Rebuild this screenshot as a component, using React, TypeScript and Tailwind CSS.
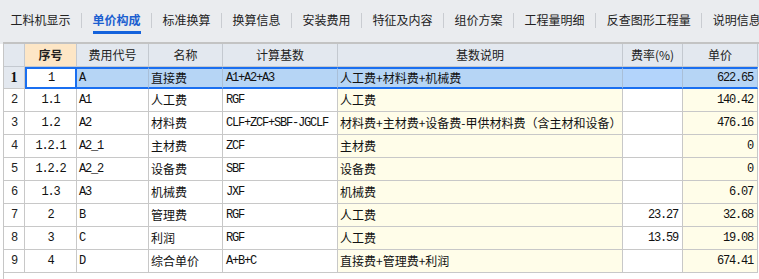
import React from 'react'

const tabs = ['工料机显示', '单价构成', '标准换算', '换算信息', '安装费用', '特征及内容', '组价方案', '工程量明细', '反查图形工程量', '说明信息']

const rows = [
  ['1', 'A', '直接费', 'A1+A2+A3', '人工费+材料费+机械费', '', '622.65'],
  ['1.1', 'A1', '人工费', 'RGF', '人工费', '', '140.42'],
  ['1.2', 'A2', '材料费', 'CLF+ZCF+SBF-JGCLF', '材料费+主材费+设备费-甲供材料费（含主材和设备）', '', '476.16'],
  ['1.2.1', 'A2_1', '主材费', 'ZCF', '主材费', '', '0'],
  ['1.2.2', 'A2_2', '设备费', 'SBF', '设备费', '', '0'],
  ['1.3', 'A3', '机械费', 'JXF', '机械费', '', '6.07'],
  ['2', 'B', '管理费', 'RGF', '人工费', '23.27', '32.68'],
  ['3', 'C', '利润', 'RGF', '人工费', '13.59', '19.08'],
  ['4', 'D', '综合单价', 'A+B+C', '直接费+管理费+利润', '', '674.41'],
]

const mono = "font-['Liberation_Mono','Noto_Sans_CJK_SC',monospace] text-[12px] tracking-[-1.2px]"
const cjk = "font-['Noto_Sans_CJK_SC',sans-serif] text-[12px]"

function TabBar() {
  return (
    <div className="h-[42px] bg-[#eaecef] flex items-start">
      {tabs.map((t, i) => (
        <React.Fragment key={t}>
          {i > 0 && <div className="w-px h-[15px] mt-[13px] bg-[#c9ccd1] shrink-0" />}
          <div className="px-[10.5px] pt-[12px] flex flex-col items-stretch shrink-0">
            <span
              className={`font-['Noto_Sans_CJK_SC',sans-serif] text-[12px] leading-[16px] whitespace-nowrap ${
                i === 1 ? 'text-[#1b5fd0] font-bold' : 'text-[#222]'
              }`}
            >
              {t}
            </span>
            {i === 1 && <div className="h-[3px] mt-[3px] bg-[#1462dc]" />}
          </div>
        </React.Fragment>
      ))}
    </div>
  )
}

function Header() {
  const cell = 'h-[23px] border-r border-b border-[#c4c9d0] flex items-center justify-center text-[#222] ' + cjk
  return (
    <div className="flex bg-[#e3e8ef]">
      <div className={cell + ' w-[21px]'} />
      <div className={cell + ' w-[52px] bg-[#fde6c6] font-bold'}>序号</div>
      <div className={cell + ' w-[72px]'}>费用代号</div>
      <div className={cell + ' w-[74px]'}>名称</div>
      <div className={cell + ' w-[115px]'}>计算基数</div>
      <div className={cell + ' w-[285px]'}>基数说明</div>
      <div className={cell + ' w-[60px]'}>费率(%)</div>
      <div className={cell + ' w-[75px]'}>单价</div>
    </div>
  )
}

function Row({ r, idx }: { r: string[]; idx: number }) {
  const sel = idx === 0
  const base = sel
    ? 'h-[22px] border-t-2 border-b-2 border-t-[#1a6ff0] border-b-[#1a6ff0] border-r border-r-[#a9bfd8] flex items-center text-[#111]'
    : 'h-[23px] border-r border-b border-[#c8c8c8] flex items-center text-[#111]'
  const yellow = sel ? 'bg-[#b6d5f5]' : 'bg-[#fffde9]'
  const white = sel ? 'bg-[#b6d5f5]' : 'bg-white'
  return (
    <div className="flex">
      <div
        className={`w-[21px] border-r border-b border-[#c8c8c8] flex items-center justify-center ${
          sel
            ? "h-[22px] bg-[#e3e8ef] font-['Liberation_Serif',serif] font-bold text-[14px] text-[#111]"
            : 'h-[23px] bg-white text-[#222] ' + mono
        }`}
      >
        {idx + 1}
      </div>
      <div
        className={
          sel
            ? `w-[52px] h-[22px] border-2 border-[#1a6ff0] bg-white flex items-center justify-center text-[#111] ${mono}`
            : `${base} w-[52px] justify-center bg-white ${mono}`
        }
      >
        {r[0]}
      </div>
      <div className={`${base} w-[72px] pl-[2px] ${white} ${mono}`}>{r[1]}</div>
      <div className={`${base} w-[74px] pl-[2px] ${white} ${cjk}`}>{r[2]}</div>
      <div className={`${base} w-[115px] pl-[3px] ${white} ${mono}`}>{r[3]}</div>
      <div className={`${base} w-[285px] pl-[2px] whitespace-nowrap overflow-hidden ${yellow} ${cjk}`}>{r[4]}</div>
      <div className={`${base} w-[60px] justify-end pr-[4px] ${sel ? 'bg-[#b3d4fb]' : 'bg-white'} ${mono}`}>{r[5]}</div>
      <div className={`${base} w-[75px] justify-end pr-[4px] ${yellow} ${mono}`}>{r[6]}</div>
    </div>
  )
}

export default function App() {
  return (
    <div className="w-[759px] h-[279px] bg-white overflow-hidden">
      <TabBar />
      <div className="bg-[#eaecef] h-[2px]">
        <div className="ml-[3px] h-[2px] bg-[#c3c3c3]" />
      </div>
      <div className="ml-[3px] h-[235px] border-l border-[#c6c6c6] bg-white">
        <Header />
        {rows.map((r, i) => (
          <Row key={i} r={r} idx={i} />
        ))}
      </div>
    </div>
  )
}
